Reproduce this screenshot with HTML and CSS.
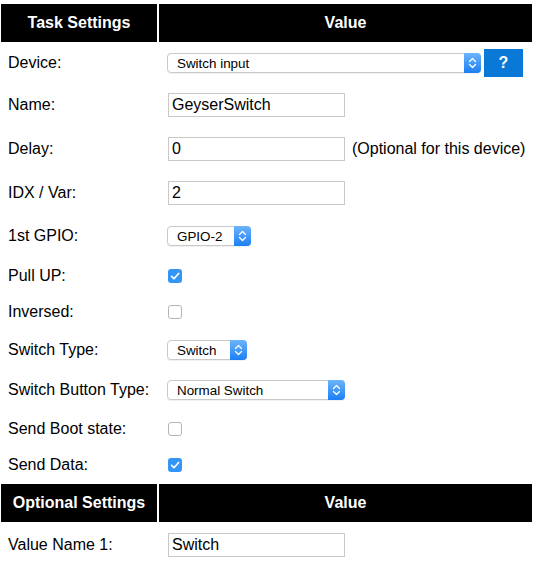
FILE: index.html
```html
<!DOCTYPE html>
<html>
<head>
<meta charset="utf-8">
<link rel="stylesheet" href="styles.css">
</head>
<body>
<div class="form">
  <div class="row head">
    <div class="hcell">Task Settings</div>
    <div class="hcell">Value</div>
  </div>

  <div class="row h38">
    <div class="label">Device:</div>
    <div class="value">
      <div class="select w-device">
        <select><option>Switch input</option></select>
        <span class="arrow"><svg width="17" height="20" viewBox="0 0 17 20"><polyline points="5.5,8.5 8.5,5.5 11.5,8.5"/><polyline points="5.5,11.5 8.5,14.5 11.5,11.5"/></svg></span>
      </div>
      <span class="help">?</span>
    </div>
  </div>

  <div class="row h42">
    <div class="label">Name:</div>
    <div class="value"><input class="text" type="text" value="GeyserSwitch"></div>
  </div>

  <div class="row h42">
    <div class="label">Delay:</div>
    <div class="value"><input class="text" type="text" value="0"><span class="hint">(Optional for this device)</span></div>
  </div>

  <div class="row h42">
    <div class="label">IDX / Var:</div>
    <div class="value"><input class="text" type="text" value="2"></div>
  </div>

  <div class="row h40">
    <div class="label">1st GPIO:</div>
    <div class="value">
      <div class="select w-gpio">
        <select><option>GPIO-2</option></select>
        <span class="arrow"><svg width="17" height="20" viewBox="0 0 17 20"><polyline points="5.5,8.5 8.5,5.5 11.5,8.5"/><polyline points="5.5,11.5 8.5,14.5 11.5,11.5"/></svg></span>
      </div>
    </div>
  </div>

  <div class="row h35">
    <div class="label">Pull UP:</div>
    <div class="value"><span class="cb on"><svg width="14" height="14" viewBox="0 0 14 14"><polyline points="3.6,7.4 6,9.8 10.6,4.4"/></svg></span></div>
  </div>

  <div class="row h34">
    <div class="label">Inversed:</div>
    <div class="value"><span class="cb"></span></div>
  </div>

  <div class="row h38">
    <div class="label">Switch Type:</div>
    <div class="value">
      <div class="select w-switch">
        <select><option>Switch</option></select>
        <span class="arrow"><svg width="17" height="20" viewBox="0 0 17 20"><polyline points="5.5,8.5 8.5,5.5 11.5,8.5"/><polyline points="5.5,11.5 8.5,14.5 11.5,11.5"/></svg></span>
      </div>
    </div>
  </div>

  <div class="row h38">
    <div class="label">Switch Button Type:</div>
    <div class="value">
      <div class="select w-sbt">
        <select><option>Normal Switch</option></select>
        <span class="arrow"><svg width="17" height="20" viewBox="0 0 17 20"><polyline points="5.5,8.5 8.5,5.5 11.5,8.5"/><polyline points="5.5,11.5 8.5,14.5 11.5,11.5"/></svg></span>
      </div>
    </div>
  </div>

  <div class="row h35">
    <div class="label">Send Boot state:</div>
    <div class="value"><span class="cb"></span></div>
  </div>

  <div class="row h34">
    <div class="label">Send Data:</div>
    <div class="value"><span class="cb on"><svg width="14" height="14" viewBox="0 0 14 14"><polyline points="3.6,7.4 6,9.8 10.6,4.4"/></svg></span></div>
  </div>

  <div class="row head">
    <div class="hcell">Optional Settings</div>
    <div class="hcell">Value</div>
  </div>

  <div class="row h42">
    <div class="label">Value Name 1:</div>
    <div class="value"><input class="text" type="text" value="Switch"></div>
  </div>
</div>
</body>
</html>
```

FILE: styles.css
```css
html, body {
  margin: 0;
  padding: 0;
  background: #fff;
}

body {
  font-family: "Liberation Sans", Arial, Helvetica, sans-serif;
  font-size: 16px;
  color: #000;
}

.form {
  width: 531px;
  margin: 4px 0 0 1px;
  display: flex;
  flex-direction: column;
  gap: 2px;
}

.row {
  display: grid;
  grid-template-columns: 156px 1fr;
  column-gap: 2px;
}

.head { height: 38px; }
.h34 { height: 34px; }
.h35 { height: 35px; }
.h38 { height: 38px; }
.h40 { height: 40px; }
.h42 { height: 42px; }

.hcell {
  background: #000;
  color: #fff;
  font-weight: bold;
  display: flex;
  align-items: center;
  justify-content: center;
}

.label {
  display: flex;
  align-items: center;
  padding-left: 7px;
}

.value {
  display: flex;
  align-items: center;
  padding-left: 8px;
}

.text {
  box-sizing: border-box;
  width: 177px;
  height: 24px;
  margin: 0 0 0 1px;
  padding: 0 3px;
  border: 1px solid #c8c8c8;
  font-family: "Liberation Sans", Arial, sans-serif;
  font-size: 16px;
  color: #000;
  background: #fff;
  outline: none;
}

.hint {
  margin-left: 7px;
}

.select {
  position: relative;
  height: 20px;
}

.select select {
  -webkit-appearance: none;
  appearance: none;
  box-sizing: border-box;
  width: 100%;
  height: 20px;
  margin: 0;
  padding: 0 20px 0 9px;
  border: 1px solid #c9c9c9;
  border-radius: 4px;
  background: #fff;
  font-family: "Liberation Sans", Arial, sans-serif;
  font-size: 13.4px;
  color: #000;
  box-shadow: 0 1px 0 rgba(0, 0, 0, 0.06);
  outline: none;
}

.w-device { width: 314px; }
.w-gpio { width: 84px; }
.w-switch { width: 80px; }
.w-sbt { width: 178px; }

.arrow {
  position: absolute;
  right: 0;
  top: 0;
  width: 17px;
  height: 20px;
  border-radius: 0 4px 4px 0;
  background: linear-gradient(#6db4fb, #1b7ff4);
  display: flex;
}

.arrow polyline {
  fill: none;
  stroke: #fff;
  stroke-width: 1.3;
  stroke-linecap: round;
  stroke-linejoin: round;
}

.help {
  margin-left: 3px;
  width: 39px;
  height: 28px;
  background: #0a78d6;
  color: #fff;
  font-weight: bold;
  font-size: 16px;
  display: flex;
  align-items: center;
  justify-content: center;
}

.cb {
  box-sizing: border-box;
  width: 14px;
  height: 14px;
  margin-left: 1px;
  border: 1px solid #b4b4b4;
  border-radius: 3px;
  background: #fff;
  display: flex;
}

.cb.on {
  border: none;
  background: #3396f7;
}

.cb polyline {
  fill: none;
  stroke: #fff;
  stroke-width: 1.6;
  stroke-linecap: round;
  stroke-linejoin: round;
}
```
